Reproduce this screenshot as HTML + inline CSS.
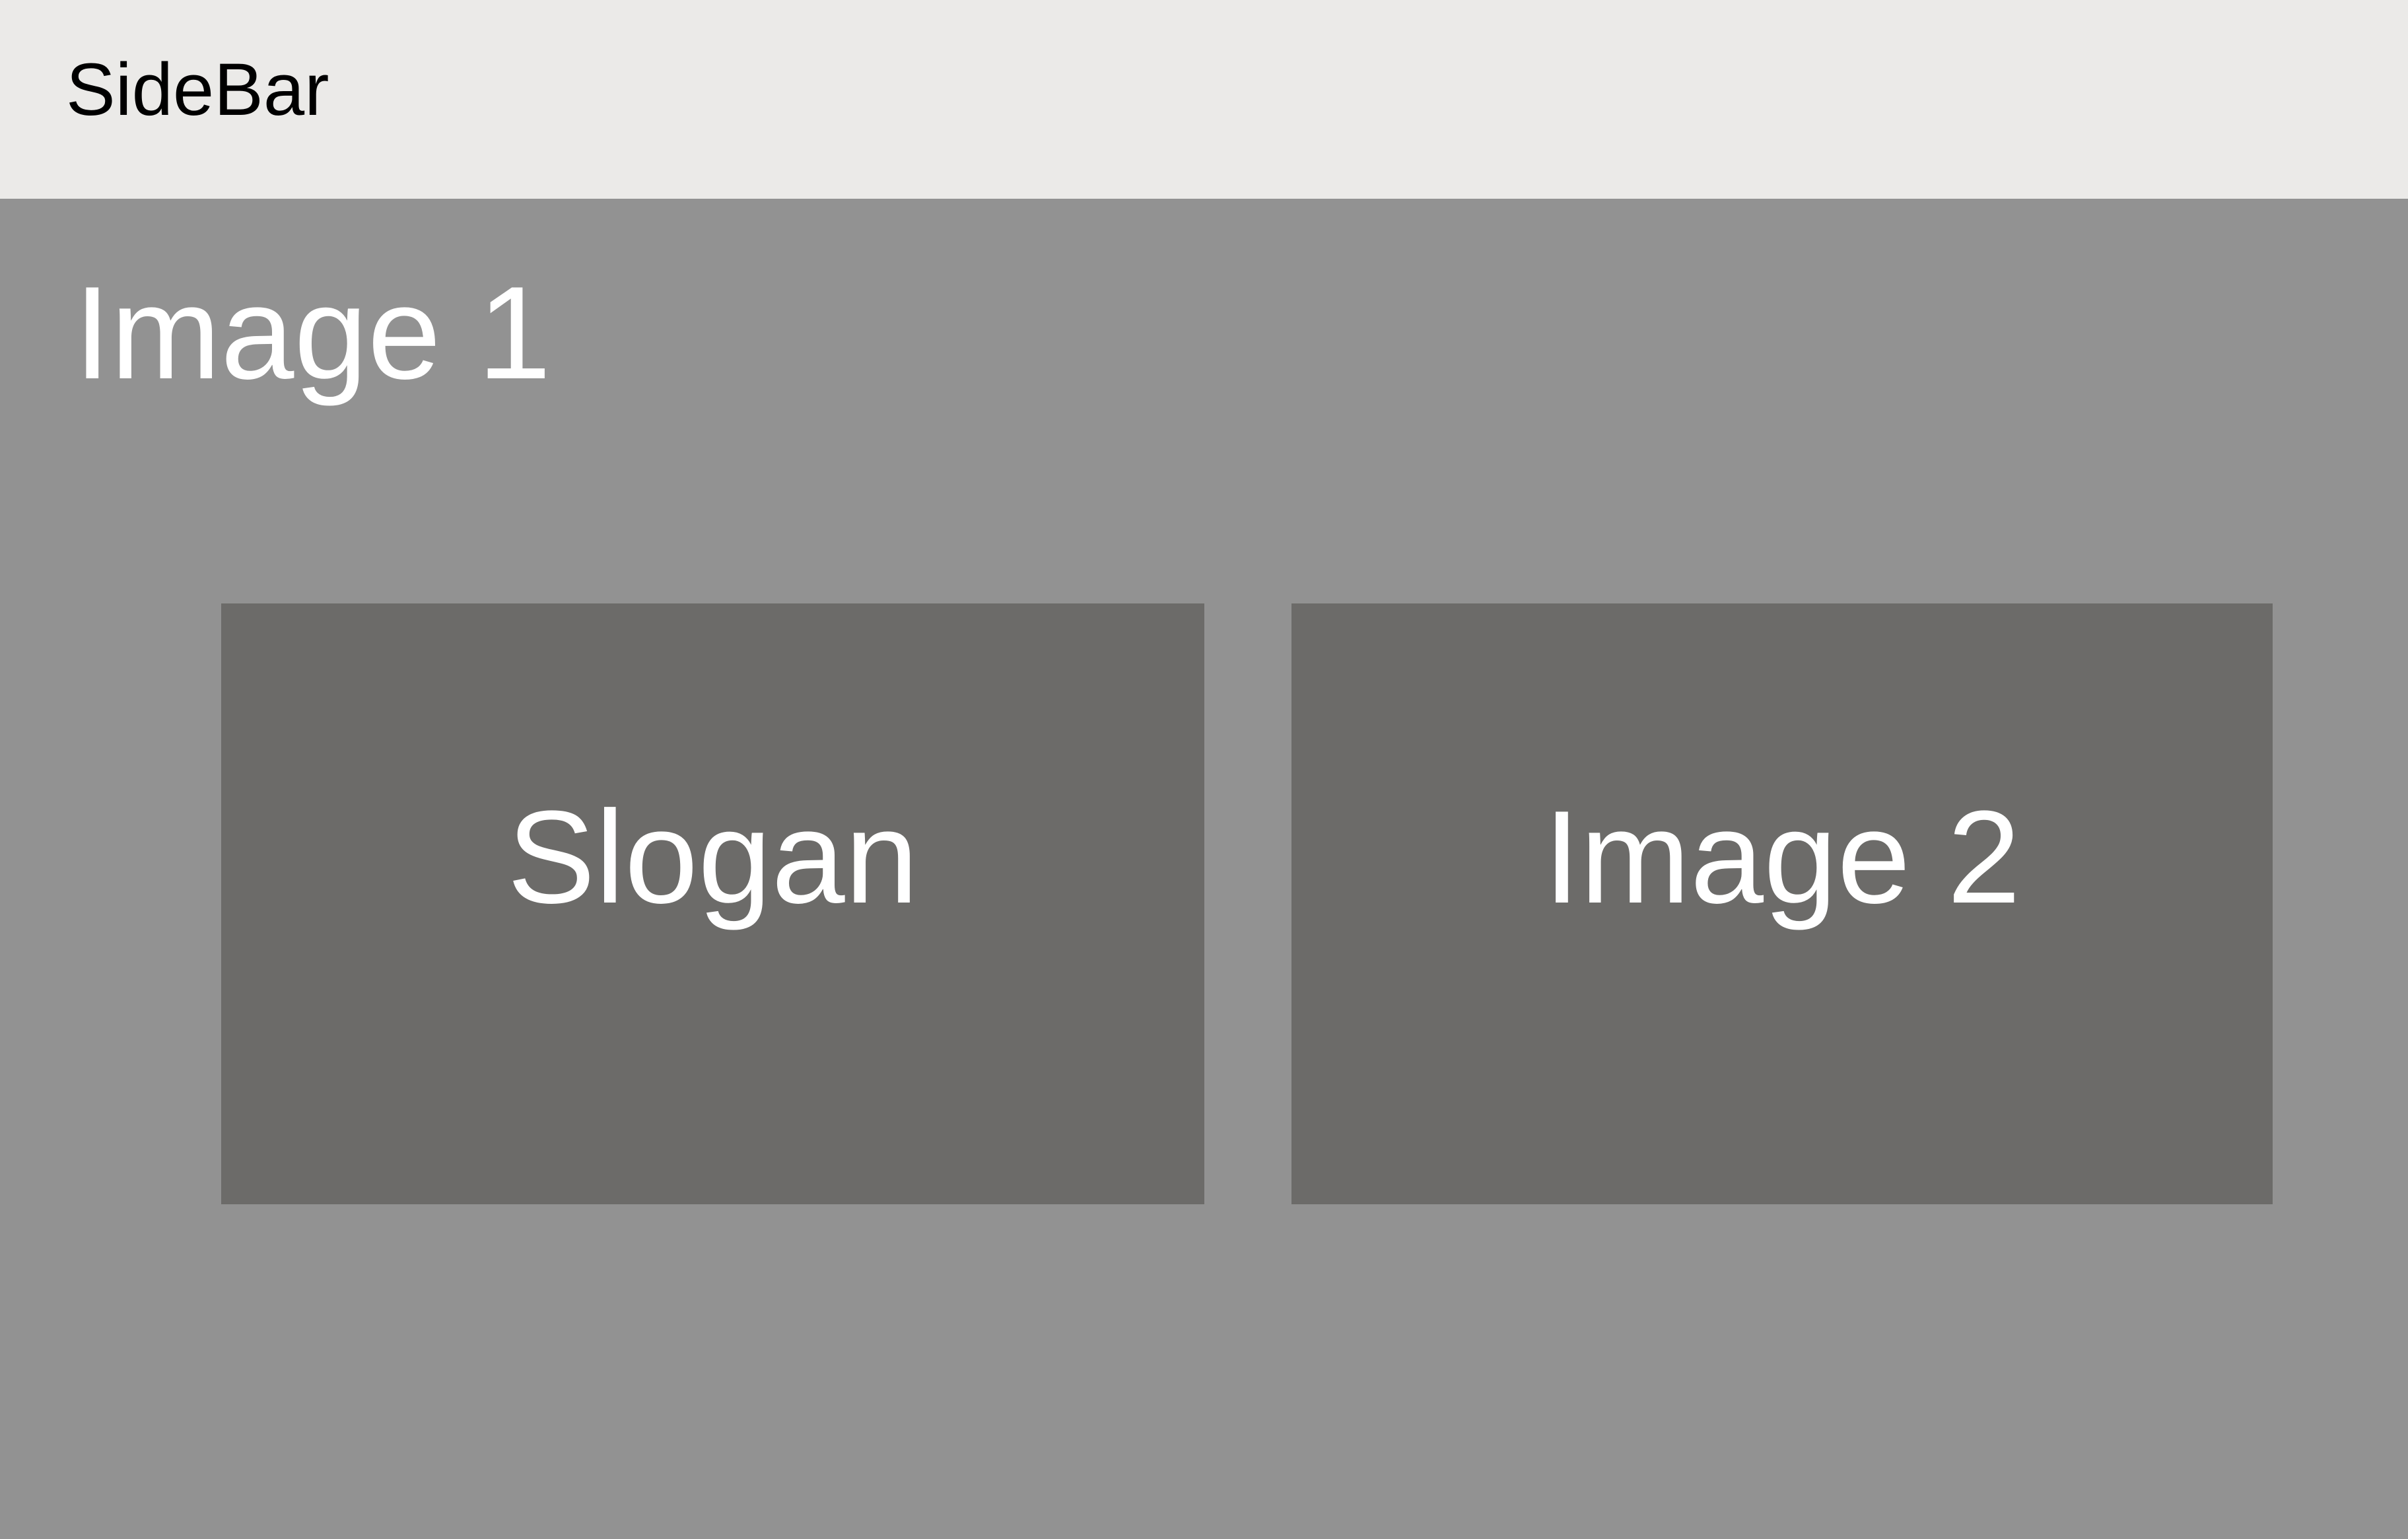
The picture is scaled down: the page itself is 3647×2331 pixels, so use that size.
<!DOCTYPE html>
<html><head><style>
html,body{margin:0;padding:0;}
body{width:3647px;height:2331px;position:relative;overflow:hidden;background:#929292;font-family:"Liberation Sans",sans-serif;}
.hdr{position:absolute;left:0;top:0;width:3647px;height:301px;background:#EBEAE8;}
.t{position:absolute;white-space:nowrap;line-height:200px;font-size:200px;color:#fff;}
.box{position:absolute;top:914px;height:910px;background:#6C6B69;}
</style></head><body>
<div class="hdr"></div>
<div class="t" style="left:100px;top:80px;font-size:112px;line-height:112px;color:#000;">SideBar</div>
<div class="t" style="left:112px;top:405px;">Image 1</div>
<div class="box" style="left:335px;width:1489px;"></div>
<div class="box" style="left:1956px;width:1486px;"></div>
<div class="t" style="left:335px;width:1489px;text-align:center;top:1199px;">Slogan</div>
<div class="t" style="left:1956px;width:1486px;text-align:center;top:1199px;">Image 2</div>
</body></html>
